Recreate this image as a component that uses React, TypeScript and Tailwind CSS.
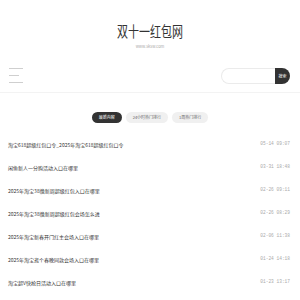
import React from "react";

const posts = [
  { title: "淘宝618超级红包口令_2025年淘宝618超级红包口令", date: "05-14 09:07" },
  { title: "闲鱼新人一分购活动入口在哪里", date: "03-31 18:48" },
  { title: "2025年淘宝38焕新周超级红包入口在哪里", date: "02-26 09:11" },
  { title: "2025年淘宝38焕新周超级红包会场怎么进", date: "02-26 08:29" },
  { title: "2025年淘宝新春开门红主会场入口在哪里", date: "02-06 11:38" },
  { title: "2025年淘宝逛个春晚同款会场入口在哪里", date: "01-24 14:18" },
  { title: "淘宝超V快抢日活动入口在哪里", date: "01-23 13:17" },
];

const tabs = ["最新内容", "24小时热门排行", "1周热门排行"];

const App: React.FC = () => {
  return (
    <div
      className="w-[300px] h-[300px] overflow-hidden bg-white text-[#333]"
      style={{ fontFamily: '"Noto Sans CJK SC", "Liberation Sans", sans-serif' }}
    >
      <div className="pt-[22px] flex flex-col items-center">
        <h1 className="h-[16px] leading-[16px] text-[11px] font-normal text-[#333] scale-y-[1.3]">双十一红包网</h1>
        <div className="mt-[5px] h-[6px] leading-[6px] text-[4px] text-[#aaa]">www.sksw.com</div>
      </div>

      <div className="mt-[10px] h-[34px] flex items-center justify-between pl-[9px] pr-[10px] border-b border-[#f3f3f3]">
        <div className="flex flex-col gap-[6px]">
          <span className="block w-[14px] h-px bg-[#cfcfcf]" />
          <span className="block w-[10px] h-px bg-[#cfcfcf]" />
          <span className="block w-[14px] h-px bg-[#cfcfcf]" />
        </div>
        <div className="flex items-center">
          <div className="w-[54px] h-[16px] rounded-l-full border border-r-0 border-[#ebebeb] bg-white" />
          <div className="w-[15px] h-[16px] rounded-r-full bg-[#333] text-white text-[4px] flex items-center justify-center">
            搜索
          </div>
        </div>
      </div>

      <div className="mt-[19px] flex justify-center gap-[4px]">
        {tabs.map((t, i) => (
          <div
            key={t}
            className={
              i === 0
                ? "h-[11px] px-[7px] rounded-full bg-[#333] text-white text-[4px] leading-[11px]"
                : "h-[11px] px-[7px] rounded-full bg-[#f0f0f0] text-[#666] text-[4px] leading-[11px]"
            }
          >
            {t}
          </div>
        ))}
      </div>

      <ul className="mt-[10px] pl-[8px] pr-[10px]">
        {posts.map((p) => (
          <li key={p.date} className="h-[23px] flex items-center justify-between">
            <span className="text-[5px] text-[#333]">{p.title}</span>
            <span className="text-[4.5px] text-[#aaa]" style={{ fontFamily: '"Liberation Mono", monospace' }}>
              {p.date}
            </span>
          </li>
        ))}
      </ul>
    </div>
  );
};

export default App;
